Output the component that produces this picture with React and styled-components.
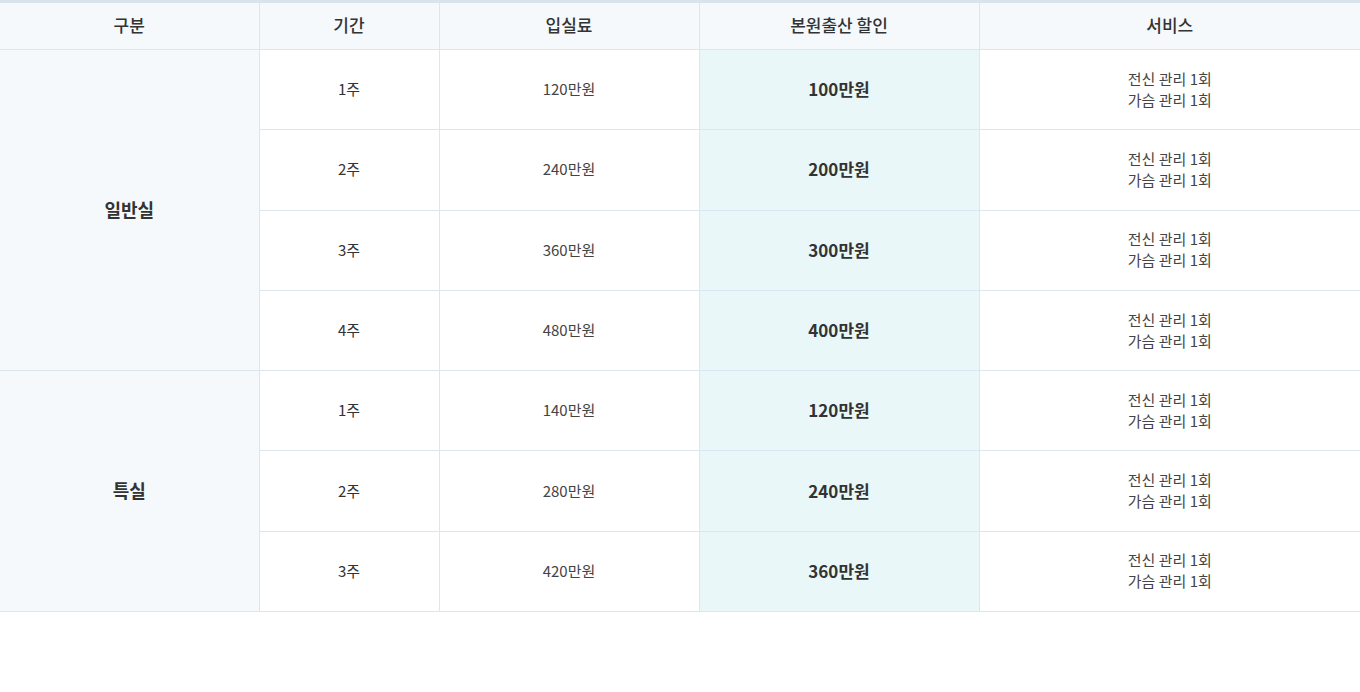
import styled, { createGlobalStyle } from 'styled-components'

const GlobalStyle = createGlobalStyle`
body {
  margin: 0;
  background: #fff;
  font-family: "Noto Sans CJK KR", "Noto Sans", sans-serif;
}
`

const prices = [
    { group: '일반실', rows: [
        { period: '1주', fee: '120만원', sale: '100만원' },
        { period: '2주', fee: '240만원', sale: '200만원' },
        { period: '3주', fee: '360만원', sale: '300만원' },
        { period: '4주', fee: '480만원', sale: '400만원' }
    ] },
    { group: '특실', rows: [
        { period: '1주', fee: '140만원', sale: '120만원' },
        { period: '2주', fee: '280만원', sale: '240만원' },
        { period: '3주', fee: '420만원', sale: '360만원' }
    ] }
]

const Table = styled.table`
width: 100%;
border-collapse: collapse;
table-layout: fixed;
border-top: 3px solid #d9e3ee;
`
const Head = styled.th`
height: 43px;
padding: 0 0 3px;
background-color: #f5f9fc;
border: 1px solid #dde5ee;
border-top: 0;
color: #333;
font-size: 17px;
font-weight: 500;
&:first-child { border-left: 0; }
&:last-child { border-right: 0; }
`
const Cell = styled.td`
height: 77.3px;
padding: 0 0 2px;
text-align: center;
border: 1px solid #dde5ee;
color: ${p => p.$color || '#444'};
font-size: 15px;
background-color: ${p => p.$bg || '#fff'};
&:last-child { border-right: 0; }
`
const GroupCell = styled(Cell)`
border-left: 0;
font-size: 18px;
font-weight: 700;
color: #333;
`
const Sale = styled(Cell)`
font-size: 17px;
font-weight: 700;
color: #333;
`
const Service = styled.div`
line-height: 21px;
font-size: 15px;
color: #444;
`

function App() {
    return (
        <>
            <GlobalStyle />
            <Table>
                <colgroup>
                    <col style={{ width: 259 }} />
                    <col style={{ width: 180 }} />
                    <col style={{ width: 260 }} />
                    <col style={{ width: 280 }} />
                    <col />
                </colgroup>
                <thead>
                    <tr>
                        <Head>구분</Head>
                        <Head>기간</Head>
                        <Head>입실료</Head>
                        <Head>본원출산 할인</Head>
                        <Head>서비스</Head>
                    </tr>
                </thead>
                <tbody>
                    {prices.map(g => g.rows.map((r, i) => (
                        <tr key={g.group + r.period}>
                            {i === 0 && <GroupCell rowSpan={g.rows.length} $bg="#f5f9fc">{g.group}</GroupCell>}
                            <Cell $color="#333">{r.period}</Cell>
                            <Cell>{r.fee}</Cell>
                            <Sale $bg="#e9f7f8">{r.sale}</Sale>
                            <Cell>
                                <Service>전신 관리 1회</Service>
                                <Service>가슴 관리 1회</Service>
                            </Cell>
                        </tr>
                    )))}
                </tbody>
            </Table>
        </>
    )
}
export default App
